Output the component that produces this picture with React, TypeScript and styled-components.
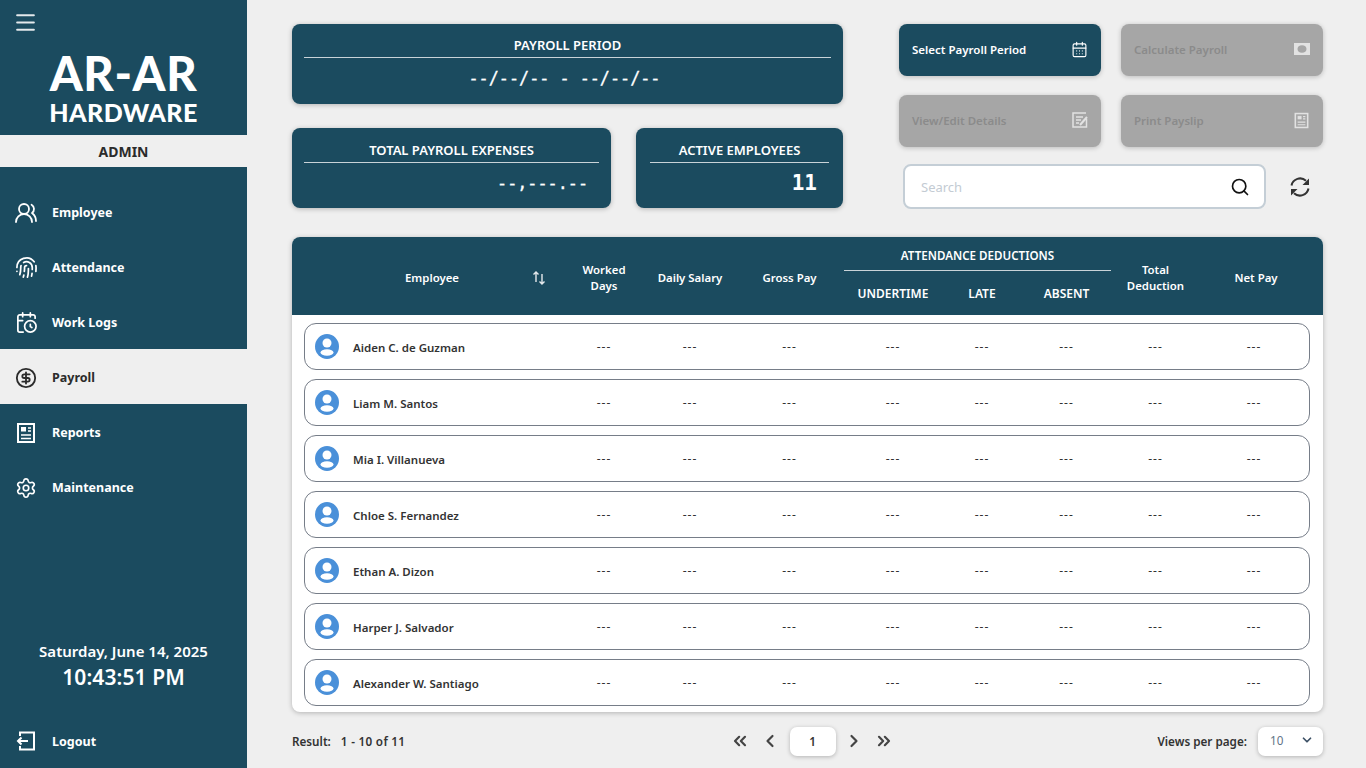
import styled, { createGlobalStyle } from "styled-components";
import {
	CalendarClock,
	CalendarDays,
	ChevronDown,
	ChevronLeft,
	ChevronRight,
	ChevronsLeft,
	ChevronsRight,
	CircleDollarSign,
	Fingerprint,
	Menu,
	Search,
	Settings,
	UsersRound,
} from "lucide-react";
import type { ReactNode } from "react";

const TEAL = "#1b4b5f";
const PAGE = "#efefef";
const FONT = `"Noto Sans", "Open Sans", "Liberation Sans", sans-serif`;

// header and body rows have to line up on the same columns
const DATA_COLUMNS = "82px 90px 109px 98px 80px 89px 89px 1fr";

const GlobalStyle = createGlobalStyle`
	html, body {
		margin: 0;
		height: 100%;
		background: ${PAGE};
		font-family: ${FONT};
	}
	* {
		box-sizing: border-box;
	}
`;

const Page = styled.div`
	display: flex;
	width: 1366px;
	height: 768px;
	overflow: hidden;
`;

const Sidebar = styled.aside`
	display: flex;
	flex-direction: column;
	width: 247px;
	height: 100%;
	flex-shrink: 0;
	background: ${TEAL};
	color: #fff;
`;

const MenuButton = styled.div`
	display: flex;
	height: 46px;
	padding: 10px 0 0 13px;
	color: #e4e9ec;
`;

const Logo = styled.div`
	display: flex;
	flex-direction: column;
	align-items: center;
	height: 89px;
	font-family: "Lato", sans-serif;
	font-weight: 900;
	color: #fff;
`;

const LogoTop = styled.div`
	font-size: 47px;
	line-height: 40px;
	letter-spacing: 0.6px;
	margin-top: 7px;
`;

const LogoBottom = styled.div`
	font-size: 25px;
	line-height: 30px;
	letter-spacing: 0.4px;
	margin-top: 4px;
`;

const RoleBar = styled.div`
	display: flex;
	align-items: center;
	justify-content: center;
	height: 32px;
	background: ${PAGE};
	color: #2b2b2b;
	font-size: 14px;
	font-weight: 700;
`;

const Nav = styled.nav`
	display: flex;
	flex-direction: column;
	padding-top: 17px;
`;

const NavItem = styled.div<{ $active?: boolean }>`
	display: flex;
	align-items: center;
	height: 55px;
	padding: 2px 0 0 14px;
	gap: 14px;
	font-size: 12.5px;
	font-weight: 700;
	background: ${(p) => (p.$active ? PAGE : "transparent")};
	color: ${(p) => (p.$active ? "#2b2b2b" : "#fff")};
`;

const IconSlot = styled.span`
	display: flex;
	align-items: center;
	justify-content: center;
	width: 24px;
	height: 24px;
`;

const Clock = styled.div`
	display: flex;
	flex-direction: column;
	align-items: center;
	margin-top: auto;
`;

const ClockDate = styled.div`
	font-size: 15px;
	font-weight: 600;
	line-height: 21px;
`;

const ClockTime = styled.div`
	font-size: 21px;
	font-weight: 600;
	line-height: 30px;
	letter-spacing: 0.1px;
`;

const LogoutRow = styled(NavItem)`
	margin-top: 22px;
	height: 54px;
	padding-top: 0;
`;

const Main = styled.main`
	display: flex;
	flex-direction: column;
	flex: 1;
	padding: 24px 43px 0 45px;
`;

const Top = styled.div`
	display: flex;
	justify-content: space-between;
	height: 213px;
	flex-shrink: 0;
`;

const Stats = styled.div`
	display: flex;
	flex-direction: column;
	gap: 24px;
	width: 551px;
`;

const StatRow = styled.div`
	display: flex;
	justify-content: space-between;
`;

const StatCard = styled.div<{ $width: number; $inset?: number; $top?: number }>`
	display: flex;
	flex-direction: column;
	width: ${(p) => p.$width}px;
	height: 80px;
	padding: ${(p) => p.$top ?? 11}px ${(p) => p.$inset ?? 12}px 0;
	background: ${TEAL};
	border-radius: 8px;
	box-shadow: 0 1px 5px rgba(0, 0, 0, 0.25);
	color: #fff;
`;

const StatTitle = styled.div`
	height: 23px;
	border-bottom: 1px solid #c9d3d8;
	font-size: 13px;
	font-weight: 600;
	line-height: 20px;
	text-align: center;
	white-space: nowrap;
`;

const StatValue = styled.div<{ $align?: string; $pad?: number; $size?: number }>`
	padding: 0 ${(p) => p.$pad ?? 0}px;
	font-family: "DejaVu Sans Mono", monospace;
	font-size: ${(p) => p.$size ?? 16.8}px;
	font-weight: ${(p) => (p.$size ? 700 : 400)};
	-webkit-text-stroke: ${(p) => (p.$size ? 0 : 0.3)}px #fff;
	line-height: 40px;
	text-align: ${(p) => p.$align ?? "center"};
	white-space: pre;
`;

const PeriodValue = styled(StatValue)`
	padding-right: 6px;
`;

const Actions = styled.div`
	display: flex;
	flex-direction: column;
	width: 424px;
`;

const ButtonGrid = styled.div`
	display: grid;
	grid-template-columns: 202px 202px;
	grid-auto-rows: 52px;
	gap: 19px 20px;
`;

const ActionButton = styled.button<{ $enabled?: boolean }>`
	display: flex;
	align-items: center;
	justify-content: space-between;
	padding: 0 13px 2px;
	border: none;
	border-radius: 8px;
	font-family: ${FONT};
	font-size: 11.5px;
	font-weight: 600;
	background: ${(p) => (p.$enabled ? TEAL : "#a6a6a6")};
	color: ${(p) => (p.$enabled ? "#fff" : "#8b8b8b")};
	box-shadow: 0 1px 5px rgba(0, 0, 0, 0.22);
`;

const ButtonIcon = styled.span<{ $enabled?: boolean }>`
	display: flex;
	color: ${(p) => (p.$enabled ? "#fff" : "#e2e2e2")};
`;

const SearchRow = styled.div`
	display: flex;
	align-items: center;
	margin-top: 17px;
	padding-left: 4px;
`;

const SearchBox = styled.div`
	display: flex;
	align-items: center;
	justify-content: space-between;
	width: 363px;
	height: 45px;
	padding: 0 14px 0 16px;
	background: #fff;
	border: 2px solid #c4ced6;
	border-radius: 8px;
`;

const SearchText = styled.span`
	font-size: 13px;
	color: #c3cbd3;
`;

const RefreshIcon = styled.span`
	display: flex;
	margin-left: 23px;
	color: #333;
`;

const TableCard = styled.section`
	display: flex;
	flex-direction: column;
	height: 475px;
	flex-shrink: 0;
	background: #fff;
	border-radius: 8px;
	box-shadow: 0 1px 5px rgba(0, 0, 0, 0.25);
	overflow: hidden;
`;

const TableHead = styled.div`
	display: grid;
	grid-template-columns: 271px ${DATA_COLUMNS};
	height: 78px;
	flex-shrink: 0;
	padding-right: 11px;
	background: ${TEAL};
	color: #fff;
	font-size: 11.4px;
	font-weight: 600;
`;

const HeadCell = styled.div`
	display: flex;
	align-items: center;
	justify-content: center;
	padding-top: 4px;
	line-height: 16px;
	text-align: center;
`;

const EmployeeHead = styled(HeadCell)`
	justify-content: space-between;
	padding: 4px 17px 0 113px;
`;

const GroupHead = styled.div`
	display: flex;
	flex-direction: column;
	grid-column: span 3;
`;

const GroupTitle = styled.div`
	height: 34px;
	padding-top: 11px;
	border-bottom: 1px solid #c9d3d8;
	font-size: 11.6px;
	line-height: 15px;
	text-align: center;
`;

const GroupCells = styled.div`
	display: grid;
	grid-template-columns: 98px 80px 89px;
	flex: 1;
	margin-top: -2px;
	font-size: 12px;
`;

const Rows = styled.div`
	display: flex;
	flex-direction: column;
	gap: 9px;
	padding: 8px 13px 0 12px;
`;

const Row = styled.div`
	display: grid;
	grid-template-columns: 259px ${DATA_COLUMNS};
	align-items: center;
	height: 47px;
	border: 1px solid #767d88;
	border-radius: 12px;
	color: #333;
	font-size: 11.5px;
`;

const EmployeeCell = styled.div`
	display: flex;
	align-items: center;
	gap: 14px;
	padding-left: 10px;
	font-weight: 600;
	white-space: nowrap;
`;

const EmployeeName = styled.span`
	margin-top: 2px;
`;

const DataCell = styled.div`
	text-align: center;
	font-size: 12px;
	letter-spacing: 1px;
	padding-right: 2px;
`;

const Footer = styled.footer`
	display: grid;
	grid-template-columns: 1fr auto 1fr;
	align-items: center;
	height: 56px;
	padding-top: 2px;
	color: #333;
	font-size: 11.7px;
	font-weight: 600;
`;

const ResultText = styled.div`
	display: flex;
	gap: 10px;
`;

const ResultRange = styled.span`
	letter-spacing: 0.3px;
`;

const Pager = styled.div`
	display: flex;
	align-items: center;
	gap: 10px;
	margin-left: 8px;
	color: #444;
`;

const PagerIcon = styled.span`
	display: flex;
`;

const PageBox = styled.div`
	display: flex;
	align-items: center;
	justify-content: center;
	width: 46px;
	height: 29px;
	margin-right: -2px;
	background: #fff;
	border-radius: 7px;
	box-shadow: 0 1px 4px rgba(0, 0, 0, 0.25);
	color: #333;
`;

const PerPage = styled.div`
	display: flex;
	align-items: center;
	justify-content: flex-end;
	gap: 11px;
`;

const PerPageSelect = styled.div`
	display: flex;
	align-items: center;
	justify-content: space-between;
	width: 65px;
	height: 29px;
	padding: 0 9px 2px 12px;
	background: #fff;
	border-radius: 7px;
	box-shadow: 0 1px 4px rgba(0, 0, 0, 0.25);
	color: #5f7388;
	font-weight: 400;
`;

const ReportIcon = ({ size = 22 }: { size?: number }) => (
	<svg width={size} height={size} viewBox="0 0 22 22" fill="none" stroke="currentColor" strokeWidth="2">
		<rect x="3" y="2" width="16" height="18" />
		<rect x="6.5" y="5.5" width="4" height="3.5" fill="currentColor" strokeWidth="1" />
		<path d="M13 6h3M13 9h3M6 13h10M6 16.500h10" strokeWidth="1.6" />
	</svg>
);

const LogoutIcon = () => (
	<svg width="22" height="22" viewBox="0 0 22 22" fill="none" stroke="currentColor" strokeWidth="2">
		<path d="M5 6V2.500h14v17H5V16" />
		<path d="M13 11H3M6.500 7.500 3 11l3.500 3.500" />
	</svg>
);

const BanknoteIcon = () => (
	<svg width="16" height="12" viewBox="0 0 16 12">
		<path
			fillRule="evenodd"
			fill="currentColor"
			d="M0 0h16v12H0zM8 2.200c-2.800 0-4.500 1.700-4.500 3.800s1.700 3.800 4.500 3.800 4.500-1.700 4.500-3.800S10.800 2.200 8 2.200z"
		/>
	</svg>
);

const NoteEditIcon = () => (
	<svg width="16" height="16" viewBox="0 0 16 16" fill="none" stroke="currentColor" strokeWidth="1.500">
		<path d="M14.500 7v8H1V1h13" />
		<path d="M4 5h7M4 8h5M4 11h3" />
		<path d="m8 13 7-8" strokeWidth="2" />
	</svg>
);

const SyncIcon = () => (
	<svg width="22" height="22" viewBox="0 0 22 22" fill="none" stroke="currentColor" strokeWidth="2">
		<path d="M2.500 9.500A8.700 8.700 0 0 1 17 4.800" />
		<path d="M19.500 12.500A8.700 8.700 0 0 1 5 17.200" />
		<path d="M20 2.500v6.500h-6.500z" fill="currentColor" stroke="none" />
		<path d="M2 19.500V13h6.500z" fill="currentColor" stroke="none" />
	</svg>
);

const SortIcon = () => (
	<svg width="14" height="16" viewBox="0 0 14 16" fill="none" stroke="#e4e9ec" strokeWidth="1.400">
		<path d="M4 12V2M1.500 4.500 4 2l2.500 2.500" />
		<path d="M10 4v10M7.500 11.500 10 14l2.500-2.500" />
	</svg>
);

const Avatar = () => (
	<svg width="24" height="25" viewBox="0 0 24 25">
		<ellipse cx="12" cy="12.500" rx="12" ry="12.500" fill="#4a90d9" />
		<circle cx="12" cy="9" r="4.500" fill="#fff" />
		<ellipse cx="12" cy="18.500" rx="6.500" ry="3.300" fill="#fff" />
	</svg>
);

const navItems: { label: string; icon: ReactNode; active?: boolean }[] = [
	{ label: "Employee", icon: <UsersRound size={24} strokeWidth={1.8} /> },
	{ label: "Attendance", icon: <Fingerprint size={23} strokeWidth={1.8} /> },
	{ label: "Work Logs", icon: <CalendarClock size={23} strokeWidth={1.8} /> },
	{ label: "Payroll", icon: <CircleDollarSign size={22} strokeWidth={2} />, active: true },
	{ label: "Reports", icon: <ReportIcon /> },
	{ label: "Maintenance", icon: <Settings size={22} strokeWidth={1.8} /> },
];

const employees = [
	"Aiden C. de Guzman",
	"Liam M. Santos",
	"Mia I. Villanueva",
	"Chloe S. Fernandez",
	"Ethan A. Dizon",
	"Harper J. Salvador",
	"Alexander W. Santiago",
];

const buttons: { label: string; icon: ReactNode; enabled?: boolean }[] = [
	{ label: "Select Payroll Period", icon: <CalendarDays size={17} strokeWidth={1.6} />, enabled: true },
	{ label: "Calculate Payroll", icon: <BanknoteIcon /> },
	{ label: "View/Edit Details", icon: <NoteEditIcon /> },
	{ label: "Print Payslip", icon: <ReportIcon size={17} /> },
];

export default function App() {
	return (
		<Page>
			<GlobalStyle />
			<Sidebar>
				<MenuButton>
					<Menu size={25} strokeWidth={2} />
				</MenuButton>
				<Logo>
					<LogoTop>AR-AR</LogoTop>
					<LogoBottom>HARDWARE</LogoBottom>
				</Logo>
				<RoleBar>ADMIN</RoleBar>
				<Nav>
					{navItems.map((item) => (
						<NavItem key={item.label} $active={item.active}>
							<IconSlot>{item.icon}</IconSlot>
							{item.label}
						</NavItem>
					))}
				</Nav>
				<Clock>
					<ClockDate>Saturday, June 14, 2025</ClockDate>
					<ClockTime>10:43:51 PM</ClockTime>
				</Clock>
				<LogoutRow>
					<IconSlot>
						<LogoutIcon />
					</IconSlot>
					Logout
				</LogoutRow>
			</Sidebar>
			<Main>
				<Top>
					<Stats>
						<StatCard $width={551}>
							<StatTitle>PAYROLL PERIOD</StatTitle>
							<PeriodValue>--/--/-- - --/--/--</PeriodValue>
						</StatCard>
						<StatRow>
							<StatCard $width={319} $top={12}>
								<StatTitle>TOTAL PAYROLL EXPENSES</StatTitle>
								<StatValue $align="right" $pad={11}>
									--,---.--
								</StatValue>
							</StatCard>
							<StatCard $width={207} $inset={14} $top={12}>
								<StatTitle>ACTIVE EMPLOYEES</StatTitle>
								<StatValue $align="right" $pad={12} $size={21}>
									11
								</StatValue>
							</StatCard>
						</StatRow>
					</Stats>
					<Actions>
						<ButtonGrid>
							{buttons.map((b) => (
								<ActionButton key={b.label} $enabled={b.enabled}>
									{b.label}
									<ButtonIcon $enabled={b.enabled}>{b.icon}</ButtonIcon>
								</ActionButton>
							))}
						</ButtonGrid>
						<SearchRow>
							<SearchBox>
								<SearchText>Search</SearchText>
								<Search size={20} color="#111" strokeWidth={2} />
							</SearchBox>
							<RefreshIcon>
								<SyncIcon />
							</RefreshIcon>
						</SearchRow>
					</Actions>
				</Top>
				<TableCard>
					<TableHead>
						<EmployeeHead>
							Employee
							<SortIcon />
						</EmployeeHead>
						<HeadCell>
							Worked
							<br />
							Days
						</HeadCell>
						<HeadCell>Daily Salary</HeadCell>
						<HeadCell>Gross Pay</HeadCell>
						<GroupHead>
							<GroupTitle>ATTENDANCE DEDUCTIONS</GroupTitle>
							<GroupCells>
								<HeadCell>UNDERTIME</HeadCell>
								<HeadCell>LATE</HeadCell>
								<HeadCell>ABSENT</HeadCell>
							</GroupCells>
						</GroupHead>
						<HeadCell>
							Total
							<br />
							Deduction
						</HeadCell>
						<HeadCell>Net Pay</HeadCell>
					</TableHead>
					<Rows>
						{employees.map((name) => (
							<Row key={name}>
								<EmployeeCell>
									<Avatar />
									<EmployeeName>{name}</EmployeeName>
								</EmployeeCell>
								{Array.from({ length: 8 }, (_, i) => (
									<DataCell key={i}>---</DataCell>
								))}
							</Row>
						))}
					</Rows>
				</TableCard>
				<Footer>
					<ResultText>
						<span>Result:</span>
						<ResultRange>1 - 10 of 11</ResultRange>
					</ResultText>
					<Pager>
						<PagerIcon>
							<ChevronsLeft size={20} strokeWidth={2.6} />
						</PagerIcon>
						<PagerIcon>
							<ChevronLeft size={20} strokeWidth={2.6} />
						</PagerIcon>
						<PageBox>1</PageBox>
						<PagerIcon>
							<ChevronRight size={20} strokeWidth={2.6} />
						</PagerIcon>
						<PagerIcon>
							<ChevronsRight size={20} strokeWidth={2.6} />
						</PagerIcon>
					</Pager>
					<PerPage>
						Views per page:
						<PerPageSelect>
							10
							<ChevronDown size={14} strokeWidth={3} color="#3d5166" />
						</PerPageSelect>
					</PerPage>
				</Footer>
			</Main>
		</Page>
	);
}
